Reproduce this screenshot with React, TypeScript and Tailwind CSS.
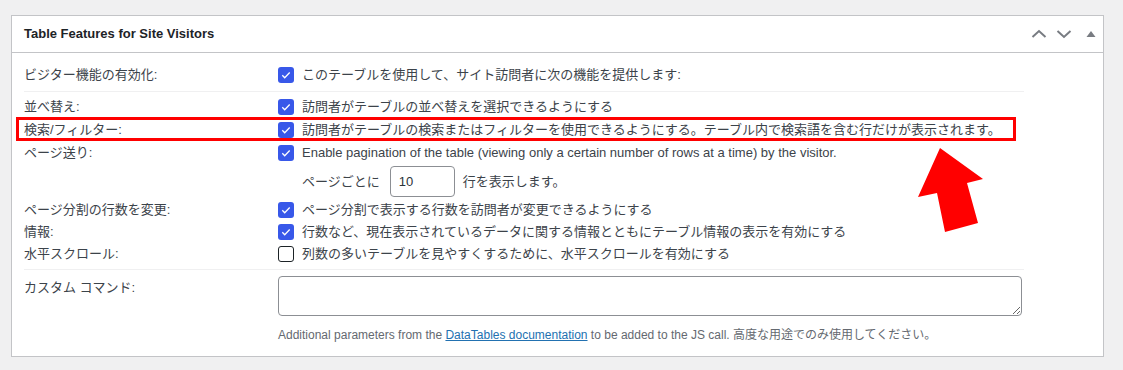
import React from 'react';

const Box = ({ on }: { on: boolean }) =>
  on ? (
    <span className="flex h-4 w-4 shrink-0 items-center justify-center rounded-[3px] bg-[#3858e9]">
      <svg viewBox="0 0 16 16" className="h-4 w-4">
        <path d="M4.3 8.3l2.4 2.4 5-5.2" stroke="#fff" strokeWidth="1.3" fill="none" />
      </svg>
    </span>
  ) : (
    <span className="h-4 w-4 shrink-0 rounded-[3px] border-[1.5px] border-[#1d2327] bg-white" />
  );

const Row = ({
  label,
  on,
  text,
  h,
  children,
}: {
  label: string;
  on: boolean;
  text: string;
  h: string;
  children?: React.ReactNode;
}) => (
  <div className={`relative flex items-center ${h}`}>
    <div className="w-[254px] shrink-0">{label}</div>
    <Box on={on} />
    <div className="ml-2 whitespace-nowrap">{text}</div>
    {children}
  </div>
);

export default function App() {
  return (
    <div className="relative min-h-[370px] bg-[#f0f0f1] pl-[11px] pt-[15px] font-['Liberation_Sans','Noto_Sans_CJK_JP',sans-serif] text-[13px] leading-[22px] text-[#3c434a]">
      <div className="w-[1093px] border border-[#c3c4c7] bg-white">
        {/* header */}
        <div className="flex h-[37px] items-center justify-between border-b border-[#c3c4c7] pl-[12px] pr-[7px]">
          <h2 className="text-[13px] font-bold text-[#1d2327]">Table Features for Site Visitors</h2>
          <div className="flex items-center text-[#787c82]">
            <svg width="16" height="10" viewBox="0 0 16 10" className="mr-[9px]">
              <path d="M1.5 8l6.5-6 6.5 6" stroke="currentColor" strokeWidth="2" fill="none" />
            </svg>
            <svg width="16" height="10" viewBox="0 0 16 10" className="mr-[14px]">
              <path d="M1.5 2l6.5 6 6.5-6" stroke="currentColor" strokeWidth="2" fill="none" />
            </svg>
            <svg width="10" height="8" viewBox="0 0 10 8">
              <path d="M0.5 7h9L5 1z" fill="currentColor" />
            </svg>
          </div>
        </div>

        {/* body */}
        <div className="w-[1012px] pb-[12px] pl-[12px] pt-[11px]">
          <div className="border-b border-[#f0f0f1] pb-[5px]">
            <Row
              h="h-[22px]"
              label="ビジター機能の有効化:"
              on
              text="このテーブルを使用して、サイト訪問者に次の機能を提供します:"
            />
          </div>

          <div className="border-b border-[#f0f0f1] pb-[4px] pt-[3px]">
            <Row h="h-[23px]" label="並べ替え:" on text="訪問者がテーブルの並べ替えを選択できるようにする" />
            <Row
              h="h-[23px]"
              label="検索/フィルター:"
              on
              text="訪問者がテーブルの検索またはフィルターを使用できるようにする。テーブル内で検索語を含む行だけが表示されます。"
            >
              <div className="absolute -left-[8px] -top-[1px] h-[24px] w-[1000px] border-[3px] border-[#ff0000]" />
            </Row>
            <Row
              h="h-[23px]"
              label="ページ送り:"
              on
              text="Enable pagination of the table (viewing only a certain number of rows at a time) by the visitor."
            />
            <div className="flex h-[35px] items-center pl-[278px]">
              <span>ページごとに</span>
              <input
                readOnly
                value="10"
                className="ml-[10px] mr-[8px] h-[31px] w-[65px] rounded-[4px] border border-[#8c8f94] px-[8px] text-[13px] text-[#2c3338] outline-none"
              />
              <span>行を表示します。</span>
            </div>
            <Row h="h-[22px]" label="ページ分割の行数を変更:" on text="ページ分割で表示する行数を訪問者が変更できるようにする" />
            <Row h="h-[22px]" label="情報:" on text="行数など、現在表示されているデータに関する情報とともにテーブル情報の表示を有効にする" />
            <Row h="h-[22px]" label="水平スクロール:" on={false} text="列数の多いテーブルを見やすくするために、水平スクロールを有効にする" />
          </div>

          <div className="flex pt-[6px]">
            <div className="w-[254px] shrink-0 pt-[1px]">カスタム コマンド:</div>
            <div>
              <textarea className="block h-[40px] w-[744px] rounded-[4px] border border-[#8c8f94] bg-white outline-none" />
              <p className="mt-[10px] text-[12px] leading-[18px] text-[#646970]">
                Additional parameters from the{' '}
                <a className="text-[#2271b1] underline">DataTables documentation</a> to be added to the JS call.
                高度な用途でのみ使用してください。
              </p>
            </div>
          </div>
        </div>
      </div>

      {/* callout arrow */}
      <svg className="absolute left-[915px] top-[145px]" width="72" height="90" viewBox="0 0 72 90">
        <path d="M25 3L68 34 52 38 63 78 30 87 22 48 3 52z" fill="#ff0000" />
      </svg>
    </div>
  );
}
